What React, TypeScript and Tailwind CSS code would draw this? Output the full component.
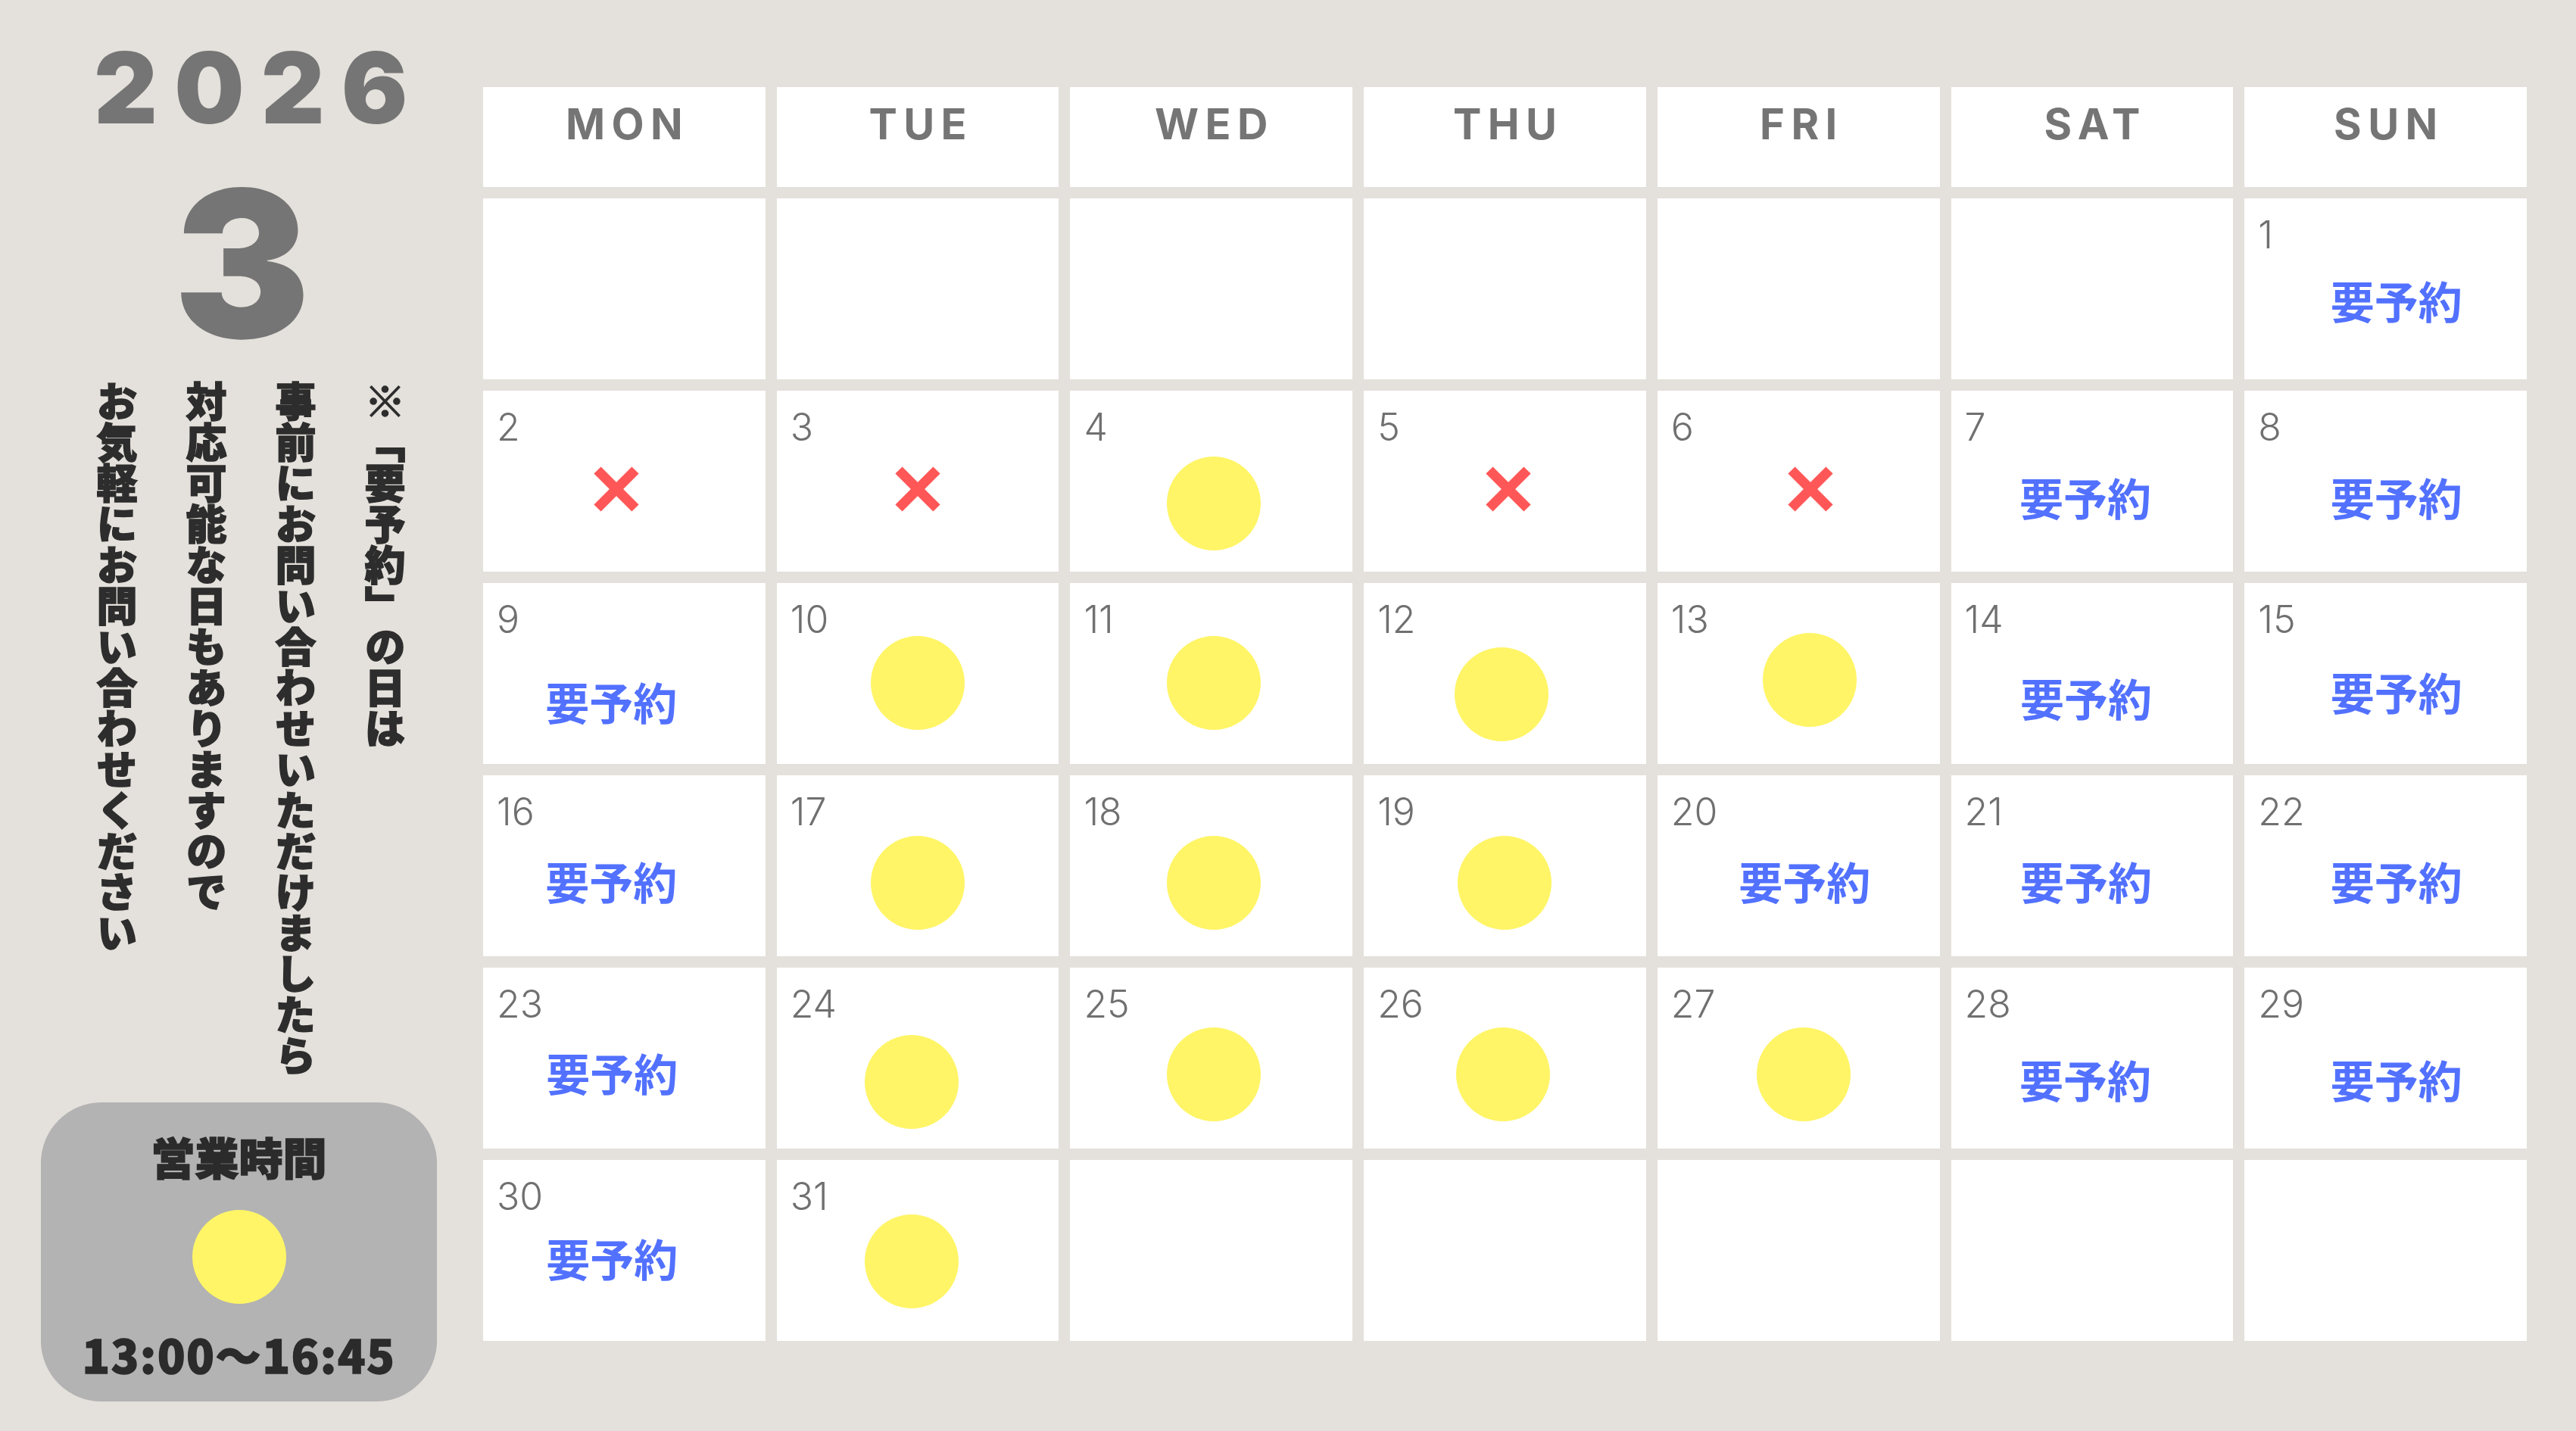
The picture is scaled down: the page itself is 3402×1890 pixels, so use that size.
type Mark = "x" | "o" | "r";

interface Day {
  d: number;
  m: Mark;
  dx: number;
  dy: number;
}

const days: Day[] = [
  { d: 1, m: "r", dx: 14, dy: 15 },
  { d: 2, m: "x", dx: -10, dy: 10 },
  { d: 3, m: "x", dx: 0, dy: 10 },
  { d: 4, m: "o", dx: 3, dy: 29 },
  { d: 5, m: "x", dx: 5, dy: 10 },
  { d: 6, m: "x", dx: 16, dy: 10 },
  { d: 7, m: "r", dx: -9, dy: 21 },
  { d: 8, m: "r", dx: 14, dy: 21 },
  { d: 9, m: "r", dx: -17, dy: 37 },
  { d: 10, m: "o", dx: 0, dy: 12 },
  { d: 11, m: "o", dx: 3, dy: 12 },
  { d: 12, m: "o", dx: -4, dy: 27 },
  { d: 13, m: "o", dx: 15, dy: 8 },
  { d: 14, m: "r", dx: -8, dy: 32 },
  { d: 15, m: "r", dx: 14, dy: 24 },
  { d: 16, m: "r", dx: -17, dy: 20 },
  { d: 17, m: "o", dx: 0, dy: 22 },
  { d: 18, m: "o", dx: 3, dy: 22 },
  { d: 19, m: "o", dx: 0, dy: 22 },
  { d: 20, m: "r", dx: 8, dy: 20 },
  { d: 21, m: "r", dx: -8, dy: 20 },
  { d: 22, m: "r", dx: 14, dy: 20 },
  { d: 23, m: "r", dx: -16, dy: 19 },
  { d: 24, m: "o", dx: -8, dy: 31 },
  { d: 25, m: "o", dx: 3, dy: 21 },
  { d: 26, m: "o", dx: -2, dy: 21 },
  { d: 27, m: "o", dx: 7, dy: 21 },
  { d: 28, m: "r", dx: -9, dy: 28 },
  { d: 29, m: "r", dx: 14, dy: 28 },
  { d: 30, m: "r", dx: -16, dy: 10 },
  { d: 31, m: "o", dx: -8, dy: 14 },
];

const weekdays = ["MON", "TUE", "WED", "THU", "FRI", "SAT", "SUN"];

// March 2026 starts on a Sunday
const cells: (Day | null)[] = [
  ...Array(6).fill(null),
  ...days,
  ...Array(5).fill(null),
];

const jp = "font-['Noto_Sans_CJK_JP','Noto_Sans',sans-serif]";

function Cross() {
  return (
    <svg width="60" height="60" viewBox="0 0 60 60" className="block">
      <line x1="5" y1="5" x2="55" y2="55" stroke="#ff5757" strokeWidth="13" />
      <line x1="55" y1="5" x2="5" y2="55" stroke="#ff5757" strokeWidth="13" />
    </svg>
  );
}

function MarkView({ m }: { m: Mark }) {
  if (m === "x") return <Cross />;
  if (m === "o") return <div className="w-[124px] h-[124px] rounded-full bg-[#fff566]" />;
  return (
    <span className={`${jp} text-[58px] leading-none font-bold text-[#5271ff]`}>要予約</span>
  );
}

function DayCell({ day }: { day: Day | null }) {
  return (
    <div className="grid bg-white">
      {day && (
        <>
          <span className="col-start-1 row-start-1 self-start justify-self-start pl-[18px] pt-[23px] font-['Inter',sans-serif] font-light text-[50px] leading-none text-[#707070]">
            {day.d}
          </span>
          <div
            className="col-start-1 row-start-1 place-self-center"
            style={{ transform: `translate(${day.dx}px, ${day.dy}px)` }}
          >
            <MarkView m={day.m} />
          </div>
        </>
      )}
    </div>
  );
}

export default function App() {
  return (
    <div className="w-[3402px] h-[1890px] overflow-hidden bg-[#e4e0db] flex">
      <aside className="w-[638px] shrink-0 pl-[54px] pr-[61px] flex flex-col">
        <div className="mt-[51px] ml-[70px] font-['Inter',sans-serif] font-black text-[130px] leading-none tracking-[0.17em] text-[#757575]">
          2026
        </div>
        <div className="mt-[32px] pl-[8px] text-center font-['Inter',sans-serif] font-black text-[270px] leading-none text-[#757575]">
          3
        </div>
        <div
          className={`${jp} mt-[20px] mr-[10px] h-[950px] [writing-mode:vertical-rl] text-[54px] leading-[118px] font-black text-[#2d2d2d] [-webkit-text-stroke:1.5px_#2d2d2d]`}
        >
          <p>※「要予約」の日は</p>
          <p>事前にお問い合わせいただけましたら</p>
          <p>対応可能な日もありますので</p>
          <p>お気軽にお問い合わせください</p>
        </div>
        <div className="mt-auto mb-[39px] h-[395px] rounded-[80px] bg-[#b3b3b3] flex flex-col items-center pt-[42px]">
          <div className={`${jp} text-[58px] leading-none font-black text-[#2b2b2b] [-webkit-text-stroke:1.5px_#2b2b2b]`}>
            営業時間
          </div>
          <div className="mt-[42px] w-[124px] h-[124px] rounded-full bg-[#fff566]" />
          <div
            className={`${jp} mt-[36px] text-[60px] leading-none font-black tracking-[0.03em] text-[#2b2b2b] [-webkit-text-stroke:1.5px_#2b2b2b]`}
          >
            13:00〜16:45
          </div>
        </div>
      </aside>

      <main className="pt-[115px]">
        <div className="w-[2699px] grid grid-cols-7 grid-rows-[132px_repeat(6,239px)] gap-[15px]">
          {weekdays.map((w) => (
            <div
              key={w}
              className="bg-white flex justify-center pt-[21px] pl-[0.15em] font-['Inter',sans-serif] font-bold text-[56px] leading-none tracking-[0.15em] text-[#757575]"
            >
              {w}
            </div>
          ))}
          {cells.map((c, i) => (
            <DayCell key={i} day={c} />
          ))}
        </div>
      </main>
    </div>
  );
}
